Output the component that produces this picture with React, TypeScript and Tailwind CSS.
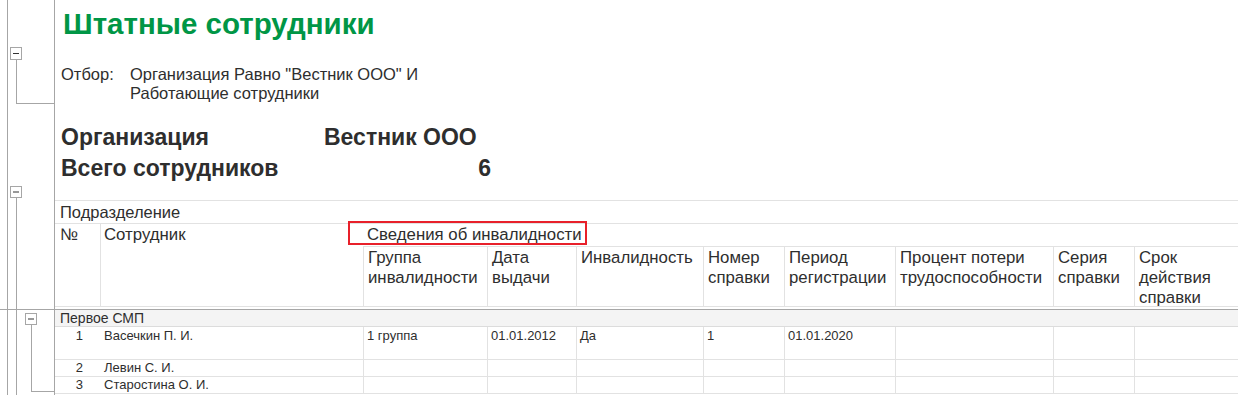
import React from "react";

const subHeaders: string[][] = [
  ["Группа", "инвалидности"],
  ["Дата", "выдачи"],
  ["Инвалидность"],
  ["Номер", "справки"],
  ["Период", "регистрации"],
  ["Процент потери", "трудоспособности"],
  ["Серия", "справки"],
  ["Срок", "действия", "справки"],
];

type Row = { n: string; name: string; cells: string[]; tall?: boolean };

const rows: Row[] = [
  { n: "1", name: "Васечкин П. И.", cells: ["1 группа", "01.01.2012", "Да", "1", "01.01.2020", "", "", ""], tall: true },
  { n: "2", name: "Левин С. И.", cells: ["", "", "", "", "", "", "", ""] },
  { n: "3", name: "Старостина О. И.", cells: ["", "", "", "", "", "", "", ""] },
];

const gridCols = "grid grid-cols-[45px_263px_124px_89px_127px_81px_111px_158px_81px_1fr]";

function Gutter() {
  const g = "#a6a6a6";
  return (
    <svg width={54} height={395} className="block shrink-0">
      <line x1={7.5} y1={0} x2={7.5} y2={395} stroke={g} />
      {/* group 1 */}
      <line x1={16.5} y1={59} x2={16.5} y2={104} stroke={g} />
      <line x1={16} y1={103.5} x2={54} y2={103.5} stroke={g} />
      <rect x={10.5} y={47.5} width={11} height={12} fill="#fff" stroke={g} />
      <line x1={13} y1={53.5} x2={19} y2={53.5} stroke="#333" />
      {/* group 2 */}
      <line x1={16.5} y1={197} x2={16.5} y2={395} stroke={g} />
      <rect x={10.5} y={186.5} width={11} height={11} fill="#fff" stroke={g} />
      <line x1={13} y1={192} x2={19} y2={192} stroke="#333" />
      {/* separator */}
      <line x1={0} y1={309.5} x2={54} y2={309.5} stroke={g} />
      {/* group 3 */}
      <line x1={31.5} y1={324} x2={31.5} y2={392} stroke={g} />
      <line x1={31} y1={391.5} x2={54} y2={391.5} stroke={g} />
      <rect x={25.5} y={313.5} width={11} height={11} fill="#fff" stroke={g} />
      <line x1={28} y1={319} x2={34} y2={319} stroke="#333" />
    </svg>
  );
}

export default function App() {
  return (
    <div className="w-[1238px] h-[395px] bg-white overflow-hidden flex font-['Liberation_Sans',Arial,sans-serif] text-[#2e2e2e]">
      <Gutter />
      <div className="flex-1 min-w-0 border-l border-[#a6a6a6] flex flex-col">
        {/* Title */}
        <div className="h-[47px] pl-[8px] text-[29.5px] font-bold leading-[47px] text-[#009646] whitespace-nowrap">
          Штатные сотрудники
        </div>
        {/* Filter */}
        <div className="pt-[18px] pl-[6px] flex text-[16.5px] leading-[19px]">
          <div className="w-[69px] shrink-0">Отбор:</div>
          <div>
            <div>Организация Равно "Вестник ООО" И</div>
            <div>Работающие сотрудники</div>
          </div>
        </div>
        {/* Organization */}
        <div className="pt-[19px] pb-[16px] pl-[6px] text-[23px] font-bold leading-[31px]">
          <div className="flex">
            <div className="w-[263px]">Организация</div>
            <div className="w-[167px]">Вестник ООО</div>
          </div>
          <div className="flex">
            <div className="w-[263px]">Всего сотрудников</div>
            <div className="w-[167px] text-right">6</div>
          </div>
        </div>
        {/* Table */}
        <div className="border-t border-[#e2e2e2] text-[16.8px]">
          <div className="h-[23px] border-b border-[#e2e2e2] pl-[5px] leading-[22px] text-[16.5px]">Подразделение</div>
          <div className={`${gridCols} grid-rows-[23px_59px] border-b border-[#e2e2e2]`}>
            <div className="row-span-2 pl-[5px] leading-[22px]">№</div>
            <div className="row-span-2 border-l border-[#e2e2e2] pl-[3px] leading-[22px]">Сотрудник</div>
            <div className="col-span-8 border-b border-[#e2e2e2] pl-[4px] leading-[22px] relative whitespace-nowrap">
              Сведения об инвалидности
              <div className="absolute left-[-15px] top-[-3px] w-[239px] h-[24px] border-2 border-[#e8202a]" />
            </div>
            {subHeaders.map((lines, i) => (
              <div key={i} className="border-l border-[#e2e2e2] pl-[4px] pt-[1px] leading-[20px] overflow-hidden whitespace-nowrap">
                {lines.map((l, j) => (
                  <div key={j}>{l}</div>
                ))}
              </div>
            ))}
          </div>
          {/* group row */}
          <div className="mt-[2px] h-[18px] border-t border-b border-[#a6a6a6] border-b-[#dcdcdc] bg-[#f4f4f4] pl-[5px] text-[14px] leading-[16px]">
            Первое СМП
          </div>
          {rows.map((r, i) => (
            <div
              key={i}
              className={`${gridCols} border-b border-[#e2e2e2] text-[13px] ${r.tall ? "h-[33px] leading-[15px]" : "h-[17px] leading-[16px]"}`}
            >
              <div className={`text-right pr-[17px] ${r.tall ? "pt-[1px]" : ""}`}>{r.n}</div>
              <div className={`pl-[4px] ${r.tall ? "pt-[1px]" : ""}`}>{r.name}</div>
              {r.cells.map((c, j) => (
                <div key={j} className={`border-l border-[#e2e2e2] pl-[3px] whitespace-nowrap ${r.tall ? "pt-[1px]" : ""}`}>
                  {c}
                </div>
              ))}
            </div>
          ))}
        </div>
      </div>
    </div>
  );
}
